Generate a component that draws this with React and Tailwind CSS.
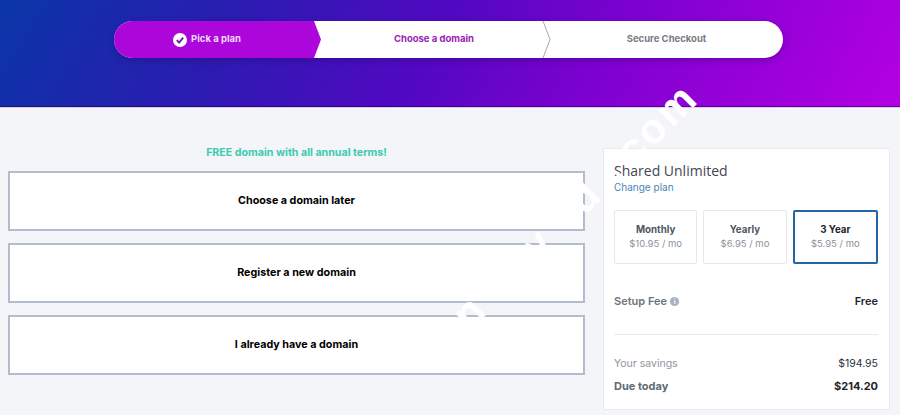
function Check() {
  return (
    <svg width="14" height="14" viewBox="0 0 14 14" className="shrink-0">
      <circle cx="7" cy="7" r="7" fill="#fff" />
      <path d="M3.8 7.2 L6.1 9.6 L10.2 4.6" fill="none" stroke="#7a0fb0" strokeWidth="1.8" />
    </svg>
  );
}

function Option({ children }) {
  return (
    <div className="h-[60px] border-2 border-[#b3bccb] bg-white flex items-center justify-center text-[10.75px] font-bold text-black">
      {children}
    </div>
  );
}

function Plan({ name, price, active }) {
  return (
    <div className={active
      ? "flex-1 h-[54px] bg-white rounded-[2px] border-2 border-[#2464a8] flex flex-col items-center justify-center pb-[1px]"
      : "flex-1 h-[54px] bg-white rounded-[2px] border border-[#e6e8ec] flex flex-col items-center justify-center pb-[1px]"}>
      <div className={active ? "text-[9.75px] leading-[14px] font-bold text-[#1c2430]" : "text-[9.75px] leading-[14px] font-bold text-[#4e5661]"}>{name}</div>
      <div className="text-[9.5px] leading-[14px] text-[#8b929b]">{price}</div>
    </div>
  );
}

export default function App() {
  return (
    <div className="relative w-[900px] h-[415px] overflow-hidden bg-[#f3f5f9] font-['Inter','Liberation_Sans',sans-serif]">
      <div className="h-[108px] border-b border-[#e2c4f5] shadow-[inset_0_-1px_0_rgba(20,0,60,0.45)] pt-[21px] pl-[114px] bg-[linear-gradient(120deg,#0a36a8_0%,#2a1cb0_25%,#5208c2_48%,#7a02ce_65%,#b400e2_100%)]">
        <div className="relative flex w-[669px] h-[37px] rounded-full overflow-hidden bg-white shadow-[0_2px_6px_rgba(40,0,90,0.35)] text-[9.5px] font-bold">
          <div className="w-[430px] flex">
            <div className="w-[215px] bg-[#ad06db] [clip-path:polygon(0_0,200px_0,207px_50%,200px_100%,0_100%)] flex items-center justify-center gap-[3px] pr-[29px] text-white">
              <Check />
              <span className="pl-[1px] text-[#f3dcfa]">Pick a plan</span>
            </div>
            <div className="w-[215px] flex items-center justify-center pr-[5px] text-[#9a22b4]">Choose a domain</div>
          </div>
          <div className="flex-1 flex items-center justify-center pl-[6px] text-[#777c85]">Secure Checkout</div>
          <svg width="10" height="37" viewBox="0 0 10 37" className="absolute left-[428px] top-0">
            <path d="M1 0 L8 18.5 L1 37" fill="none" stroke="#a5a8ae" strokeWidth="1" />
          </svg>
        </div>
      </div>

      <div className="flex pl-[8px] pt-[40px] gap-[18px]">
        <div className="w-[577px]">
          <div className="text-center text-[10.65px] leading-[10px] font-bold text-[#3ccbae] mb-[13px]">FREE domain with all annual terms!</div>
          <div className="flex flex-col gap-[12px]">
            <Option>Choose a domain later</Option>
            <Option>Register a new domain</Option>
            <Option>I already have a domain</Option>
          </div>
        </div>
        <div className="w-[287px] h-[262px] bg-white border border-[#e8eaee] pl-[10px] pr-[11px] pt-[13px]">
          <div className="text-[14px] leading-[18px] text-[#3f4650] font-['Open_Sans',sans-serif]">Shared Unlimited</div>
          <div className="text-[10px] leading-[14px] text-[#4a86b8]">Change plan</div>
          <div className="flex gap-[6px] mt-[16px]">
            <Plan name="Monthly" price="$10.95 / mo" />
            <Plan name="Yearly" price="$6.95 / mo" />
            <Plan name="3 Year" price="$5.95 / mo" active />
          </div>
          <div className="flex justify-between items-center mt-[29px] text-[11px] leading-[16px] font-semibold">
            <div className="flex items-center gap-[3px] text-[#6c737c]">
              Setup Fee
              <span className="w-[9px] h-[9px] rounded-full bg-[#a9b1ba] text-white text-[7px] leading-[9px] text-center">i</span>
            </div>
            <div className="text-[#20262e]">Free</div>
          </div>
          <div className="h-px bg-[#e6e8ec] mt-[25px]"></div>
          <div className="flex justify-between mt-[21px] text-[10.5px] leading-[16px]">
            <div className="text-[#8f959d]">Your savings</div>
            <div className="text-[#2b323a]">$194.95</div>
          </div>
          <div className="flex justify-between mt-[6px] text-[11px] leading-[16px] font-bold">
            <div className="text-[#626a73]">Due today</div>
            <div className="text-[#1c222a]">$214.20</div>
          </div>
        </div>
      </div>

      <div className="absolute left-[291px] top-[68px] w-[400px] h-[44px] origin-right -rotate-45 flex justify-end text-white text-[42px] leading-[44px] font-bold tracking-[3px] font-['Liberation_Sans',sans-serif] whitespace-nowrap pointer-events-none">
        <span className="mr-[69px]">n</span>
        <span className="mr-[39px]">v</span>
        <span className="mr-[18px]">d</span>
        <span className="mr-[8px]">.</span>
        <span>com</span>
      </div>
    </div>
  );
}
